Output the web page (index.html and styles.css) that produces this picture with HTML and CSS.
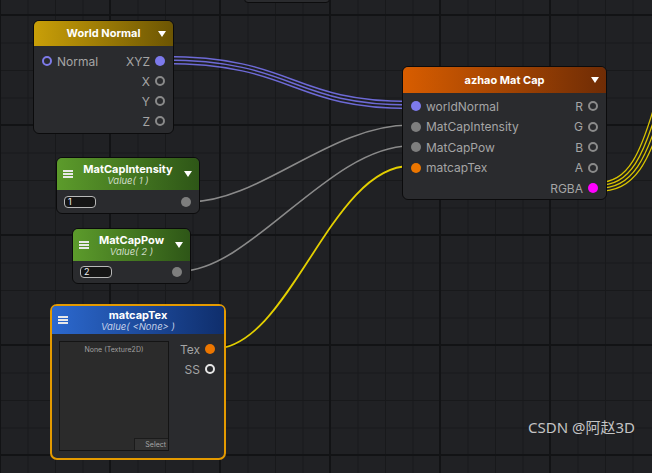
FILE: index.html
```html
<!DOCTYPE html>
<html>
<head>
<meta charset="utf-8">
<link rel="stylesheet" href="styles.css">
</head>
<body>
<div class="canvas">
  <svg class="wires" width="652" height="473" viewBox="0 0 652 473">
    <g fill="none" stroke="#6d6ad6" stroke-width="1.4">
      <path d="M164,56.5 C295,56.5 290,101.5 410,101.5"/>
      <path d="M164,60 C295,60 290,105 410,105"/>
      <path d="M164,63.5 C295,63.5 290,108.5 410,108.5"/>
    </g>
    <g fill="none" stroke="#8a8a8a" stroke-width="1.6">
      <path d="M189,202 C260,202 330,125 410,125"/>
      <path d="M181,271 C250,271 330,146 410,146"/>
    </g>
    <path d="M213,349 C290,349 330,166 410,166" fill="none" stroke="#e3cf00" stroke-width="1.8"/>
    <g fill="none" stroke="#d9c400" stroke-width="1.3">
      <path d="M597,182.5 C628,182.5 641,157.5 661,82.5"/>
      <path d="M597,185.5 C630,185.5 644,160.5 664,85.5"/>
      <path d="M597,188.5 C632,188.5 647,163.5 667,88.5"/>
      <path d="M597,191.5 C634,191.5 650,166.5 670,91.5"/>
    </g>
  </svg>

  <div class="stub"></div>

  <!-- World Normal -->
  <div class="node n-world">
    <div class="hdr hdr-gold">
      <span></span>
      <span class="title">World Normal</span>
      <span class="arrow"></span>
    </div>
    <div class="body body-ports">
      <div class="row">
        <span class="in"><i class="port ring-purple"></i>Normal</span>
        <span class="out">XYZ<i class="port fill-purple"></i></span>
      </div>
      <div class="row"><span></span><span class="out">X<i class="port ring"></i></span></div>
      <div class="row"><span></span><span class="out">Y<i class="port ring"></i></span></div>
      <div class="row"><span></span><span class="out">Z<i class="port ring"></i></span></div>
    </div>
  </div>

  <!-- azhao Mat Cap -->
  <div class="node n-matcap">
    <div class="hdr hdr-orange">
      <span></span>
      <span class="title">azhao Mat Cap</span>
      <span class="arrow"></span>
    </div>
    <div class="body body-ports">
      <div class="row">
        <span class="in"><i class="port fill-purple"></i>worldNormal</span>
        <span class="out">R<i class="port ring"></i></span>
      </div>
      <div class="row">
        <span class="in"><i class="port fill-gray"></i>MatCapIntensity</span>
        <span class="out">G<i class="port ring"></i></span>
      </div>
      <div class="row">
        <span class="in"><i class="port fill-gray"></i>MatCapPow</span>
        <span class="out">B<i class="port ring"></i></span>
      </div>
      <div class="row">
        <span class="in"><i class="port fill-orange"></i>matcapTex</span>
        <span class="out">A<i class="port ring"></i></span>
      </div>
      <div class="row"><span></span><span class="out">RGBA<i class="port fill-magenta"></i></span></div>
    </div>
  </div>

  <!-- MatCapIntensity -->
  <div class="node n-intensity">
    <div class="hdr hdr-green hdr-tall">
      <span class="burger"><b></b><b></b><b></b></span>
      <span class="title2"><span class="title">MatCapIntensity</span><span class="sub sub-green">Value( 1 )</span></span>
      <span class="arrow"></span>
    </div>
    <div class="body body-value">
      <span class="field">1</span>
      <i class="port fill-gray"></i>
    </div>
  </div>

  <!-- MatCapPow -->
  <div class="node n-pow">
    <div class="hdr hdr-green hdr-tall">
      <span class="burger"><b></b><b></b><b></b></span>
      <span class="title2"><span class="title">MatCapPow</span><span class="sub sub-green">Value( 2 )</span></span>
      <span class="arrow"></span>
    </div>
    <div class="body body-value">
      <span class="field">2</span>
      <i class="port fill-gray"></i>
    </div>
  </div>

  <!-- matcapTex -->
  <div class="node n-tex">
    <div class="hdr hdr-blue hdr-tall">
      <span class="burger"><b></b><b></b><b></b></span>
      <span class="title2"><span class="title">matcapTex</span><span class="sub sub-blue">Value( &lt;None&gt; )</span></span>
      <span></span>
    </div>
    <div class="body body-tex">
      <div class="preview">
        <span class="preview-label">None (Texture2D)</span>
        <span class="select">Select</span>
      </div>
      <div class="tex-ports">
        <div class="row"><span></span><span class="out">Tex<i class="port fill-orange"></i></span></div>
        <div class="row"><span></span><span class="out">SS<i class="port ring-white"></i></span></div>
      </div>
    </div>
  </div>

  <div class="watermark">CSDN @阿赵3D</div>
</div>
</body>
</html>
```

FILE: styles.css
```css
html, body {
  margin: 0;
  padding: 0;
  background: #1f2023;
}

.canvas {
  position: relative;
  width: 652px;
  height: 473px;
  overflow: hidden;
  font-family: Inter, "Noto Sans", sans-serif;
  background-color: #202124;
  background-image:
    linear-gradient(90deg, #121315 2px, transparent 2px),
    linear-gradient(#121315 2px, transparent 2px),
    linear-gradient(90deg, #18191b 1px, transparent 1px),
    linear-gradient(#18191b 1px, transparent 1px);
  background-size: 110px 110px, 110px 110px, 27.5px 27.5px, 27.5px 27.5px;
  background-position: -1px 0, 0 14px, 0 0, 0 15px;
}

.wires {
  position: absolute;
  left: 0;
  top: 0;
}

.stub {
  position: absolute;
  left: 244px;
  top: -8px;
  width: 84px;
  height: 9px;
  background: #2a2b2e;
  border: 1px solid #0c0c0d;
  border-radius: 4px;
}

/* ---------- nodes ---------- */
.node {
  position: absolute;
  box-sizing: border-box;
  background: #2a2b2e;
  border: 1px solid #0b0b0c;
  border-radius: 6px;
  display: flex;
  flex-direction: column;
}

.n-world { left: 33px; top: 20px; width: 141px; height: 114px; }
.n-matcap { left: 402px; top: 66px; width: 205px; height: 134px; }
.n-intensity { left: 56px; top: 157px; width: 144px; height: 57px; }
.n-pow { left: 72px; top: 228px; width: 119px; height: 56px; }
.n-tex {
  left: 50px; top: 304px; width: 176px; height: 156px;
  border: 2px solid #e49a00;
  border-radius: 7px;
}

.hdr {
  display: grid;
  grid-template-columns: 22px 1fr 22px;
  align-items: center;
  height: 25px;
  border-radius: 5px 5px 0 0;
  color: #ffffff;
  flex: none;
}
.hdr-tall { height: 32px; }
.n-tex .hdr { height: 28px; border-radius: 4px 4px 0 0; }
.n-matcap .hdr { height: 26px; }

.hdr-gold { background: linear-gradient(90deg, #c99f08, #6c5503); }
.hdr-orange { background: linear-gradient(90deg, #d85d00, #6f2c05); }
.hdr-green { background: linear-gradient(90deg, #5c9b2b, #2e5617); }
.hdr-blue { background: linear-gradient(90deg, #2c69cf, #0f2e6c); }

.title {
  font-size: 11px;
  font-weight: 700;
  text-align: center;
  line-height: 13px;
  white-space: nowrap;
}
.title2 {
  display: flex;
  flex-direction: column;
  align-items: center;
}
.sub {
  font-size: 9.5px;
  font-style: italic;
  line-height: 10px;
  white-space: nowrap;
}
.sub-green { color: #cfdcc8; }
.sub-blue { color: #c2cfe8; }

.arrow {
  justify-self: center;
  width: 0;
  height: 0;
  border-left: 4.5px solid transparent;
  border-right: 4.5px solid transparent;
  border-top: 6px solid #ffffff;
}

.burger {
  justify-self: center;
  display: flex;
  flex-direction: column;
  gap: 1.5px;
  width: 10px;
}
.burger b {
  display: block;
  height: 1.8px;
  background: #e8e8e8;
}

/* ---------- port rows ---------- */
.body-ports { padding: 5px 8px 0; }
.n-matcap .body-ports { padding-top: 3px; }

.row {
  display: flex;
  justify-content: space-between;
  align-items: center;
  height: 20px;
  font-size: 12px;
  color: #a5a5a5;
}
.n-matcap .row { height: 20.5px; }

.in, .out {
  display: flex;
  align-items: center;
  gap: 5px;
  white-space: nowrap;
}

.port {
  display: block;
  box-sizing: border-box;
  width: 10px;
  height: 10px;
  border-radius: 50%;
  flex: none;
}
.ring { border: 2px solid #8a8a8a; }
.ring-purple { border: 2px solid #7d7ae8; }
.ring-white { border: 2px solid #e6e6e6; }
.fill-purple { background: #7d7aec; }
.fill-gray { background: #7e7e7e; }
.fill-orange { background: #ec7600; }
.fill-magenta { background: #ff00ff; }

/* ---------- value nodes ---------- */
.body-value {
  display: flex;
  justify-content: space-between;
  align-items: center;
  flex: 1;
  padding: 0 8px 0 7px;
}

.field {
  box-sizing: border-box;
  width: 32px;
  height: 12px;
  border: 1px solid #b8b8b8;
  border-radius: 4px;
  background: #151515;
  color: #f0f0f0;
  font-size: 9px;
  line-height: 10px;
  padding-left: 3px;
}

/* ---------- texture node ---------- */
.body-tex {
  display: flex;
  padding: 5px 9px 0 7px;
}

.preview {
  position: relative;
  box-sizing: border-box;
  width: 110px;
  height: 110px;
  margin-top: 2px;
  background: #2b2b2b;
  border: 1px solid #141414;
  display: flex;
  justify-content: center;
}
.preview-label {
  font-size: 7px;
  color: #a0a0a0;
  margin-top: 3px;
  white-space: nowrap;
}
.select {
  position: absolute;
  right: 0;
  bottom: 0;
  width: 34px;
  height: 12px;
  box-sizing: border-box;
  background: #333333;
  border-top: 1px solid #1b1b1b;
  border-left: 1px solid #1b1b1b;
  color: #a6a6a6;
  font-size: 7px;
  line-height: 12px;
  text-align: right;
  padding-right: 2px;
}

.tex-ports {
  flex: 1;
  display: flex;
  flex-direction: column;
}
.tex-ports .row { justify-content: flex-end; }

/* ---------- watermark ---------- */
.watermark {
  position: absolute;
  left: 528px;
  top: 417px;
  font-family: "Noto Sans", "Noto Sans CJK SC", sans-serif;
  font-size: 15px;
  line-height: 20px;
  color: #c4c4c4;
  white-space: nowrap;
}
```
